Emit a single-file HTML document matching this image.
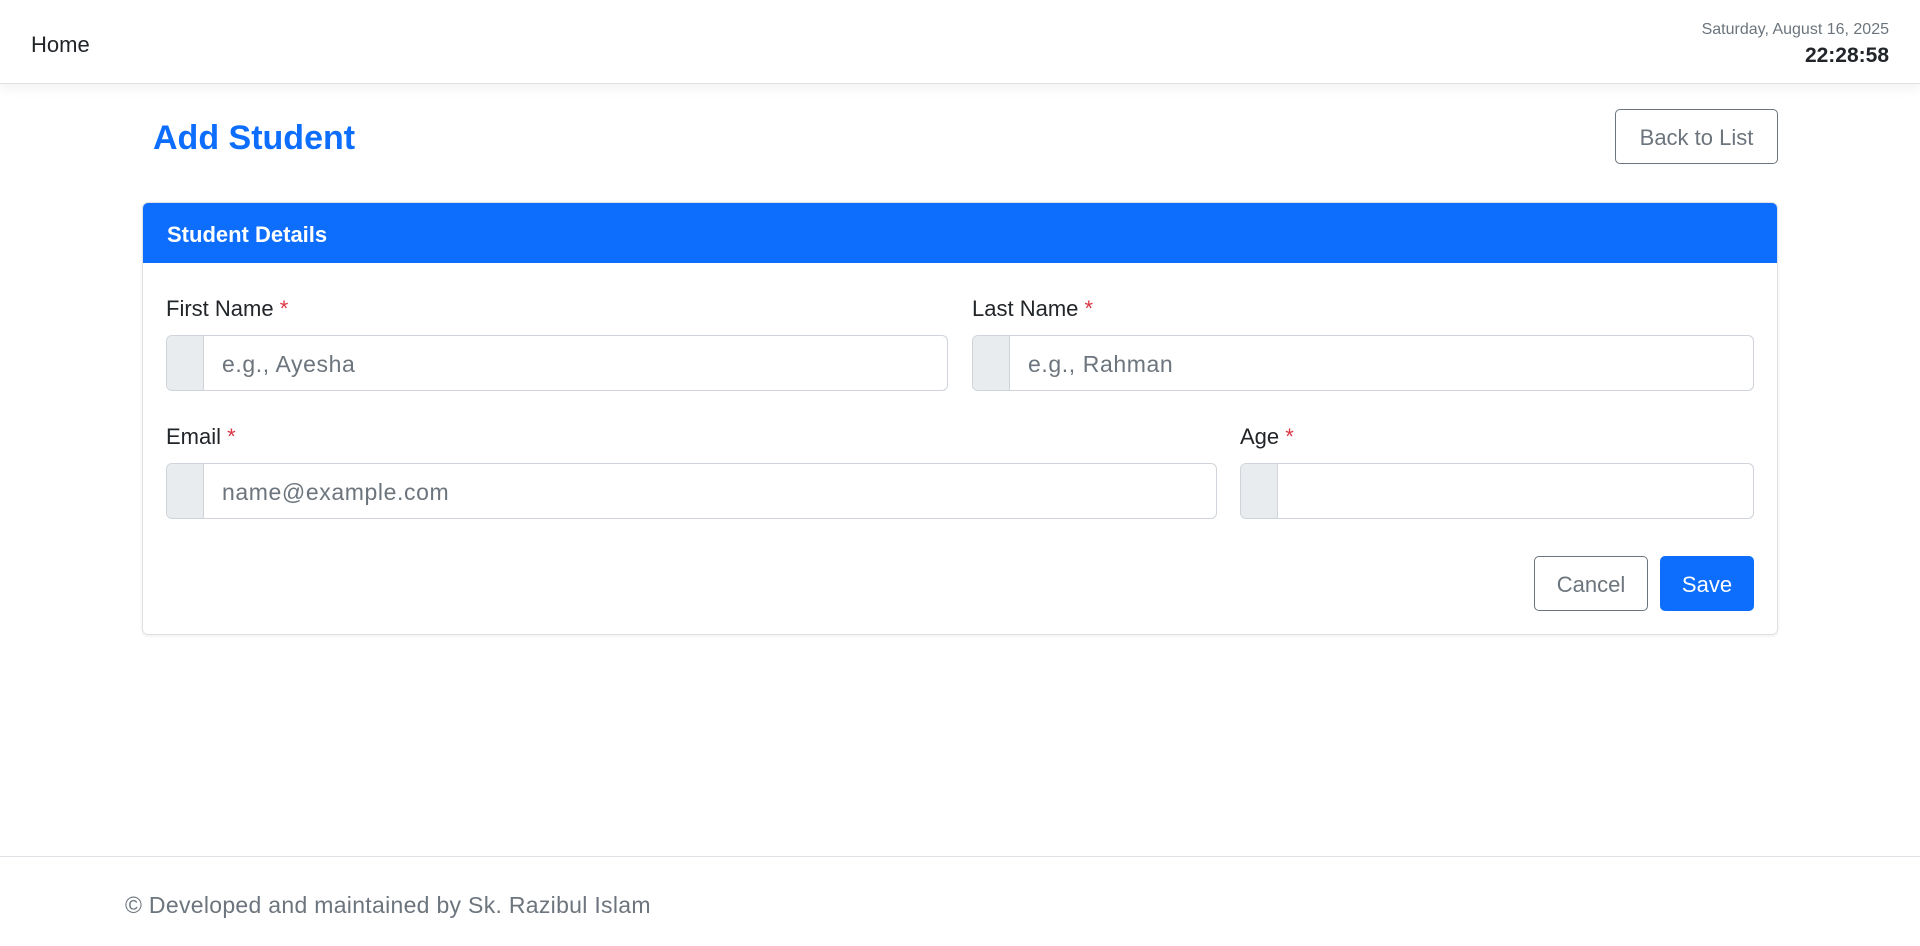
<!DOCTYPE html>
<html><head><meta charset="utf-8"><style>
*{box-sizing:border-box;margin:0;padding:0}
body{width:1920px;height:946px;font-family:"Liberation Sans",sans-serif;color:#212529;background:#fff;position:relative;overflow:hidden}
.nav{position:absolute;left:0;top:0;width:1920px;height:84px;border-bottom:1px solid #dee2e6;box-shadow:0 4px 12px rgba(0,0,0,.06);background:#fff}
.home{position:absolute;left:31px;top:32px;font-size:22px}
.date{position:absolute;right:31px;top:21px;font-size:16px;color:#6c757d;text-align:right}
.time{position:absolute;right:31px;top:44px;font-size:21px;font-weight:bold;color:#212529}
h2{position:absolute;left:153px;top:119px;font-size:34px;font-weight:bold;color:#0d6efd}
.btn{position:absolute;border-radius:5px;font-size:22px;display:flex;align-items:center;justify-content:center;padding-top:3px}
.outline{border:1px solid #6c757d;color:#6c757d;background:#fff}
.card{position:absolute;left:142px;top:202px;width:1636px;height:433px;border:1px solid #dee2e6;border-radius:6px;box-shadow:0 1px 3px rgba(0,0,0,.08);overflow:hidden}
.ch{height:60px;background:#0d6efd;color:#fff;font-weight:bold;font-size:22px;padding:19px 24px}
.lbl{position:absolute;font-size:22px}
.lbl span{color:#dc3545}
.inp{position:absolute;height:56px;border:1px solid #ced4da;border-radius:6px;overflow:hidden;display:flex;background:#fff}
.inp .a{width:37px;background:#e9ecef;border-right:1px solid #ced4da}
.inp .p{padding:15px 18px;font-size:23px;color:#6c757d;letter-spacing:0.6px}
.foot{position:absolute;left:0;top:856px;width:1920px;border-top:1px solid #dee2e6}
.ft{position:absolute;left:125px;top:892px;font-size:23px;color:#6c757d;letter-spacing:0.3px}
</style></head><body>
<div class="nav"><div class="home">Home</div><div class="date">Saturday, August 16, 2025</div><div class="time">22:28:58</div></div>
<h2>Add Student</h2>
<div class="btn outline" style="left:1615px;top:109px;width:163px;height:55px">Back to List</div>
<div class="card"><div class="ch">Student Details</div></div>
<div class="lbl" style="left:166px;top:296px">First Name <span>*</span></div>
<div class="lbl" style="left:972px;top:296px">Last Name <span>*</span></div>
<div class="inp" style="left:166px;top:335px;width:782px"><div class="a"></div><div class="p">e.g., Ayesha</div></div>
<div class="inp" style="left:972px;top:335px;width:782px"><div class="a"></div><div class="p">e.g., Rahman</div></div>
<div class="lbl" style="left:166px;top:424px">Email <span>*</span></div>
<div class="lbl" style="left:1240px;top:424px">Age <span>*</span></div>
<div class="inp" style="left:166px;top:463px;width:1051px"><div class="a"></div><div class="p">name@example.com</div></div>
<div class="inp" style="left:1240px;top:463px;width:514px"><div class="a"></div><div class="p"></div></div>
<div class="btn outline" style="left:1534px;top:556px;width:114px;height:55px">Cancel</div>
<div class="btn" style="left:1660px;top:556px;width:94px;height:55px;background:#0d6efd;color:#fff">Save</div>
<div class="foot"></div>
<div class="ft">© Developed and maintained by Sk. Razibul Islam</div>
</body></html>
